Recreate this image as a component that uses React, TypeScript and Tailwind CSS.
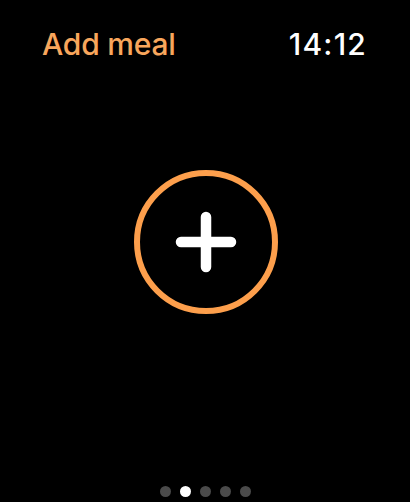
import React from 'react';

const PAGES = [0, 1, 2, 3, 4];

export default function App() {
  const active = 1;

  return (
    <div
      className="flex h-[502px] w-[410px] flex-col bg-black"
      style={{ fontFamily: 'Inter, "Liberation Sans", sans-serif' }}
    >
      <header className="flex items-start justify-between pl-[42px] pr-[43px] pt-[29px]">
        <h1 className="text-[30px] leading-none font-medium tracking-[-0.2px] text-[#f8a65c]">Add meal</h1>
        <span className="text-[30px] leading-none font-medium tracking-[1.2px] text-white">14:12</span>
      </header>

      <div className="mt-[111px] flex justify-center pl-[1px]">
        <button className="flex h-[144px] w-[144px] items-center justify-center rounded-full border-[6px] border-[#fd9f4c]">
          <svg width="62" height="62" viewBox="0 0 62 62" fill="none">
            <path d="M6 31h50M31 6v50" stroke="white" strokeWidth="10.5" strokeLinecap="round" />
          </svg>
        </button>
      </div>

      <div className="flex-1" />

      <div className="flex justify-center gap-[9px] pb-[5px]">
        {PAGES.map(i => (
          <span
            key={i}
            className={`h-[11px] w-[11px] rounded-full ${i === active ? 'bg-white' : 'bg-[#4b4b4b]'}`}
          />
        ))}
      </div>
    </div>
  );
}
